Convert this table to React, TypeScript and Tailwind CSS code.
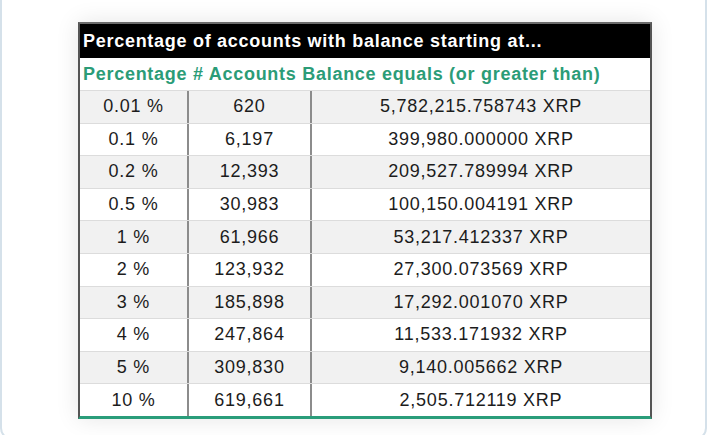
import React from "react";

const rows: [string, string, string][] = [
  ["0.01 %", "620", "5,782,215.758743 XRP"],
  ["0.1 %", "6,197", "399,980.000000 XRP"],
  ["0.2 %", "12,393", "209,527.789994 XRP"],
  ["0.5 %", "30,983", "100,150.004191 XRP"],
  ["1 %", "61,966", "53,217.412337 XRP"],
  ["2 %", "123,932", "27,300.073569 XRP"],
  ["3 %", "185,898", "17,292.001070 XRP"],
  ["4 %", "247,864", "11,533.171932 XRP"],
  ["5 %", "309,830", "9,140.005662 XRP"],
  ["10 %", "619,661", "2,505.712119 XRP"],
];

export default function App() {
  return (
    <div
      className="w-[707px] h-[435px] overflow-hidden bg-white"
      style={{ fontFamily: '"Liberation Sans", Arial, Helvetica, sans-serif' }}
    >
      <div className="w-[707px] h-[440px] bg-white border-x-2 border-b-2 border-[#d5e1ea] rounded-b-[12px] pt-[22px]">
        <div className="ml-[76px] w-[574px] border-x-2 border-t-2 border-x-[#555555] border-t-[#6b6b6b] border-b-[3px] border-b-[#2a9d7a] shadow-[0_0_22px_rgba(0,0,0,0.10)] bg-white">
          <div className="h-[34px] bg-black text-white font-bold text-[18px] tracking-[0.72px] pl-[3px] flex items-center">
            Percentage of accounts with balance starting at...
          </div>
          <div className="h-[32px] bg-white text-[#2b9c77] font-bold text-[18px] tracking-[0.72px] pl-[3px] flex items-center">
            Percentage # Accounts Balance equals (or greater than)
          </div>
          {rows.map((r, i) => (
            <div
              key={i}
              className={`flex h-[32.6px] border-t-[1.5px] border-[#dcdcdc] text-[18px] tracking-[0.75px] text-[#1c1c1c] ${
                i % 2 === 0 ? "bg-[#f1f1f1]" : "bg-white"
              }`}
            >
              <div className="w-[109px] border-r-2 border-r-[#8c8c8c] flex items-center justify-center">
                {r[0]}
              </div>
              <div className="w-[123px] border-r-2 border-r-[#8c8c8c] flex items-center justify-center">
                {r[1]}
              </div>
              <div className="flex-1 flex items-center justify-center">{r[2]}</div>
            </div>
          ))}
        </div>
      </div>
    </div>
  );
}
